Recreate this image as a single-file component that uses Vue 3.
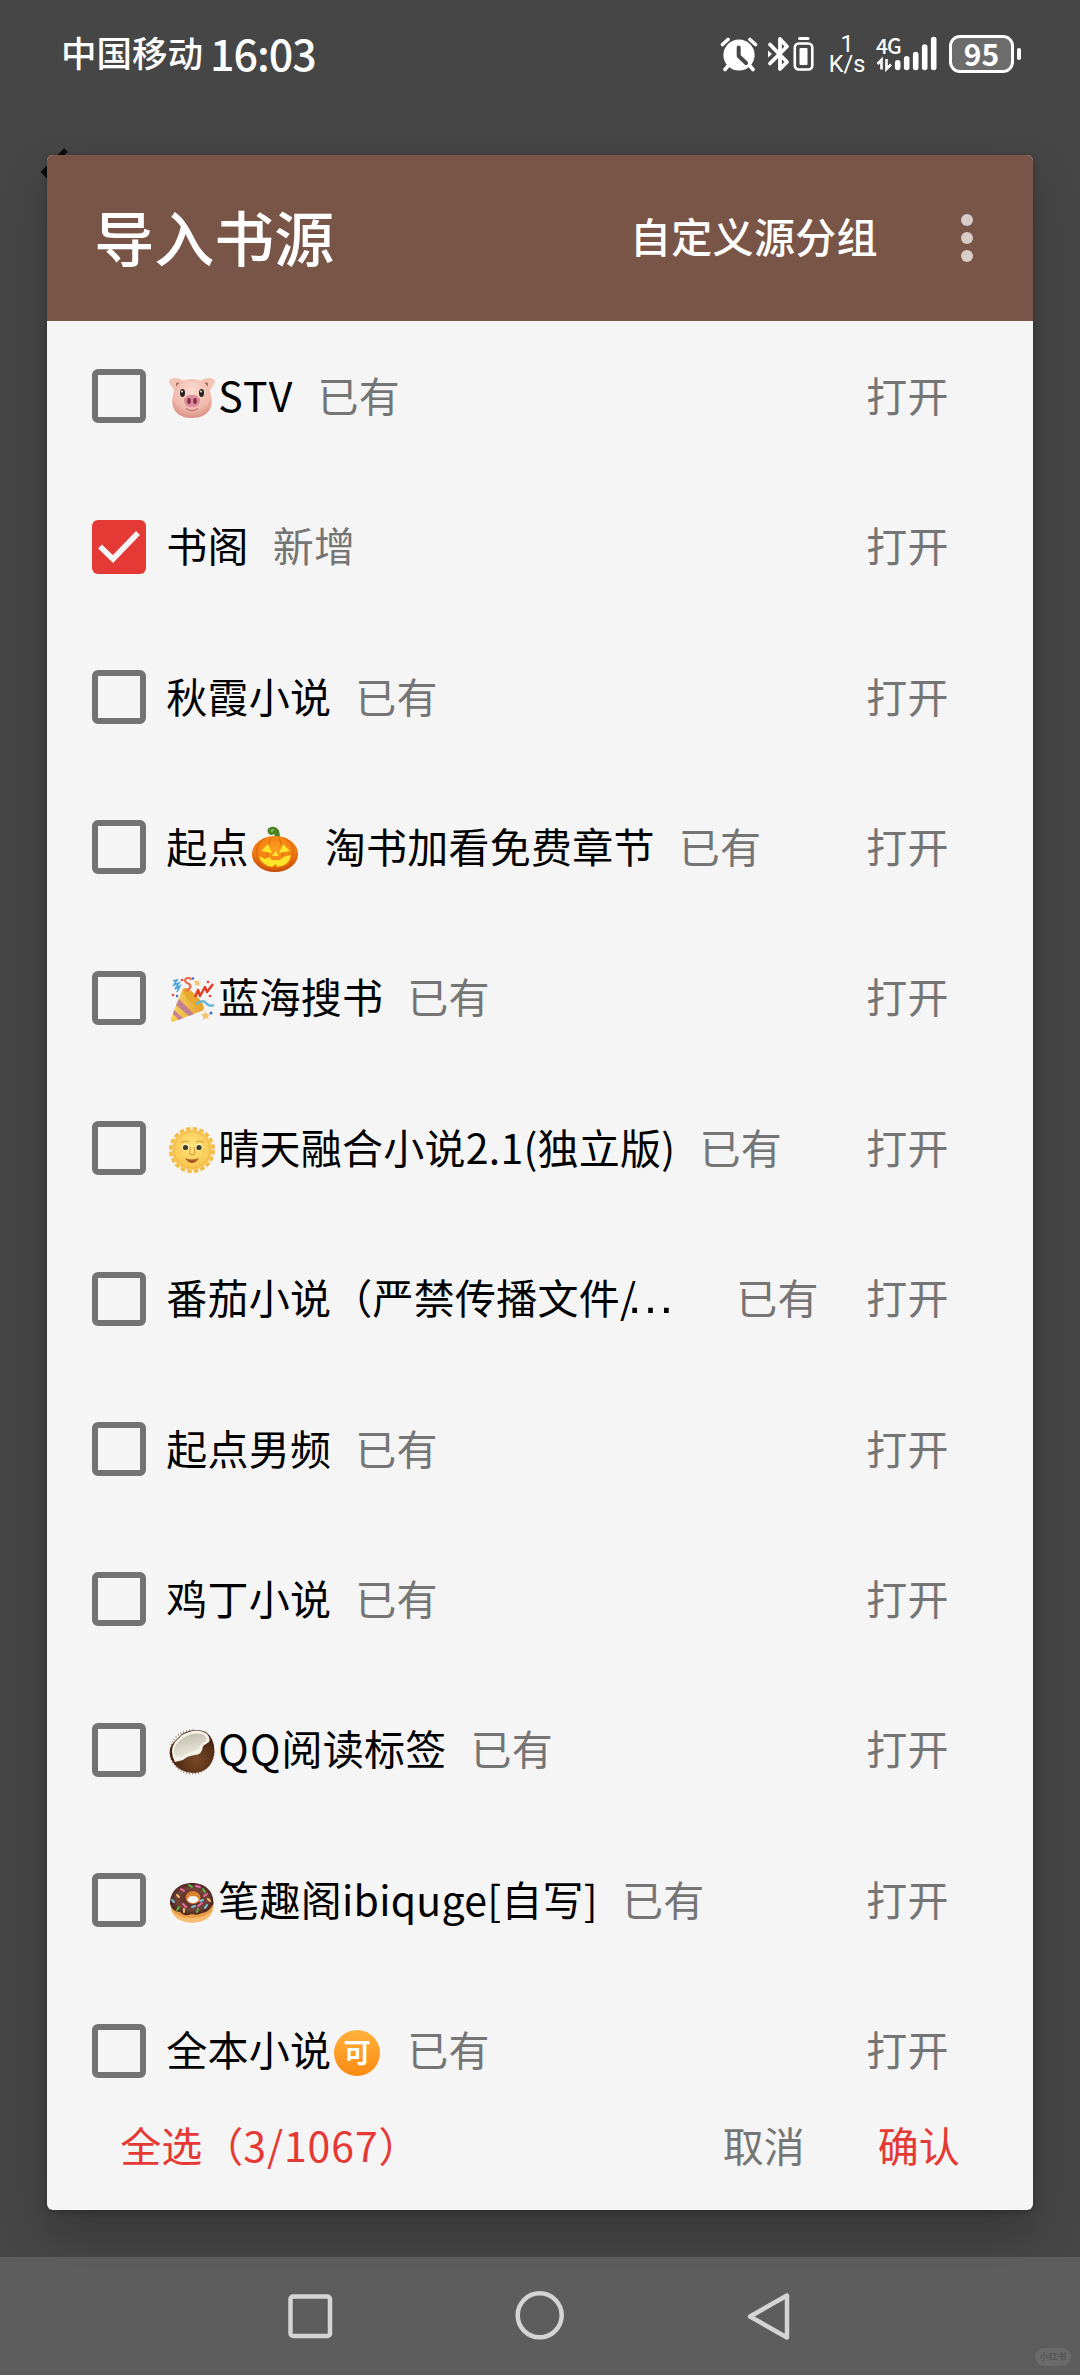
<template>
  <div class="screen">
    <header class="status-bar">
      <div class="carrier">中国移动</div>
      <div class="clock">16:03</div>
      <div class="status-icons">
        <svg class="icon-alarm" width="38" height="36" viewBox="0 0 38 36">
          <circle cx="19" cy="19" r="15.6" fill="#fff" />
          <path d="M2.5 8.500L8 3.500M35.500 8.500L30 3.500M8 30L5 33.500M30 30L33 33.500" stroke="#fff" stroke-width="3.600" stroke-linecap="round" />
          <path d="M18.700 11.500V20L26 27" fill="none" stroke="#464646" stroke-width="4" stroke-linecap="round" stroke-linejoin="round" />
        </svg>
        <svg class="icon-bluetooth" width="24" height="36" viewBox="0 0 24 36">
          <path d="M3 8.500L20 26L13 33V3L20 10.500L3 27.500" fill="none" stroke="#fff" stroke-width="3.800" stroke-linejoin="round" stroke-linecap="round" />
          <path d="M1 14.500L5 18L1 21.500Z" fill="#fff" />
        </svg>
        <svg class="icon-device" width="21" height="36" viewBox="0 0 21 36">
          <rect x="5" y="1" width="11.500" height="3" rx="1.500" fill="#fff" />
          <rect x="1.800" y="7.500" width="17.500" height="26" rx="4" fill="none" stroke="#fff" stroke-width="2.600" />
          <rect x="6.500" y="12" width="8" height="17" rx="1" fill="#fff" />
        </svg>
        <div class="speed">
          <span>1</span>
          <span>K/s</span>
        </div>
        <div class="signal">
          <span class="net-type">4G</span>
          <svg width="62" height="36" viewBox="0 0 62 36">
            <path d="M5.500 33.500V24L1.500 28M10.500 23V33L15 28.500" fill="none" stroke="#fff" stroke-width="2.600" />
            <path d="M21.700 26.800V31.500M30.700 22.800V31.500M39.700 18.500V31.500M48.700 11V31.500M57.700 3.500V31.500" stroke="#fff" stroke-width="5.600" stroke-linecap="round" />
          </svg>
        </div>
        <div class="battery">95</div>
        <div class="battery-cap"></div>
      </div>
    </header>

    <svg class="back-arrow" width="40" height="60" viewBox="0 0 40 60">
      <path d="M28 7L6 29L28 51" fill="none" stroke="#0c0c0c" stroke-width="5" />
    </svg>

    <main class="dialog">
      <div class="toolbar">
        <h1>导入书源</h1>
        <div class="group-action">自定义源分组</div>
        <div class="more"><i></i><i></i><i></i></div>
      </div>

      <div class="list">
        <div v-for="(s, i) in sources" :key="i" class="row">
          <div :class="['checkbox', { checked: s.checked }]">
            <svg v-if="s.checked" width="54" height="54" viewBox="0 0 54 54">
              <path d="M8 26.500L21 39L46 13" fill="none" stroke="#f5f5f5" stroke-width="5.500" />
            </svg>
          </div>
          <div :class="['name', { cut: s.cut }]">
            <template v-for="(part, j) in s.name" :key="j">
              <span v-if="part.icon === 'ok'" class="emoji ok">可</span>
              <svg v-else-if="part.icon" class="emoji" width="46" height="46" viewBox="0 0 46 46">
                <g v-if="part.icon === 'pig'">
                  <path d="M2 4Q8 1 15 6L6 16Q0 9 0 6Q0 5 2 4ZM44 4Q38 1 31 6L40 16Q46 9 46 6Q46 5 44 4Z" fill="#f3c3b6" />
                  <path d="M7 8Q10 7 13 8L7 14ZM39 8Q36 7 33 8L39 14Z" fill="#a9685c" />
                  <path d="M23 4C35 4 41 11 42 21C45 32 39 43 23 43C7 43 1 32 4 21C5 11 11 4 23 4Z" fill="url(#pigSkin)" />
                  <ellipse cx="13.500" cy="18" rx="2.500" ry="4" fill="#2b2323" />
                  <ellipse cx="32.500" cy="18" rx="2.500" ry="4" fill="#2b2323" />
                  <circle cx="13" cy="16.500" r="0.900" fill="#fff" />
                  <circle cx="32" cy="16.500" r="0.900" fill="#fff" />
                  <ellipse cx="23" cy="26" rx="8" ry="6.200" fill="#d98a9b" />
                  <ellipse cx="20" cy="26" rx="1.800" ry="3" fill="#842846" />
                  <ellipse cx="26" cy="26" rx="1.800" ry="3" fill="#842846" />
                  <path d="M17 33.500Q23 38 29 33.500" fill="none" stroke="#b8786b" stroke-width="1.200" />
                </g>
                <g v-else-if="part.icon === 'pumpkin'">
                  <path d="M20 15Q24 9 22 8Q19 10 17 8Q13 3 19 1Q29-1 28 15Z" fill="#4b8424" />
                  <path d="M20 6Q19 3 22 4" fill="none" stroke="#a9cf78" stroke-width="1.200" />
                  <ellipse cx="23" cy="28" rx="23" ry="18" fill="url(#pumpkinSkin)" />
                  <path d="M13 12Q3 18 5 30Q7 41 14 44M33 12Q43 18 41 30Q39 41 32 44M19 12Q11 28 19 45M27 12Q35 28 27 45" fill="none" stroke="#c94b08" stroke-width="0.900" opacity="0.700" />
                  <path d="M16 18L20 27L9 25ZM31 18L27 27L38 25ZM23.500 25L27 30H20ZM7 30L13 33L17 31L20 34L28 34L31 31L39 29Q37 40 25 41L24 38L20 41Q9 39 7 30Z" fill="#fde52a" />
                </g>
                <g v-else-if="part.icon === 'party'">
                  <path d="M14 11L35 33L4 45Q1 45 2 41Z" fill="url(#cone)" />
                  <path d="M10 22L25 37L20 39L7 28ZM5 33L14 41L10 43L4 37Z" fill="#c48093" />
                  <ellipse cx="24.500" cy="22" rx="4.500" ry="14.500" transform="rotate(-43 24.500 22)" fill="#e8a830" />
                  <path d="M17 14Q24 10 20 7Q13 4 18 1Q21 0 22 3" fill="none" stroke="#ee6b47" stroke-width="2.200" />
                  <path d="M4 4L8 3L5 8L10 6L6 12L11 9L8 15" fill="none" stroke="#48a4d7" stroke-width="1.600" />
                  <path d="M26 20L29 13L31 19L36 10L38 15L44 7" fill="none" stroke="#df3d26" stroke-width="2.500" stroke-linejoin="round" />
                  <path d="M27 27Q34 22 37 26T45 28" fill="none" stroke="#65b9d8" stroke-width="2.500" />
                  <g fill="#ef4437"><circle cx="4" cy="18" r="1.300" /><circle cx="13" cy="3" r="1.300" /><circle cx="39" cy="5" r="1.300" /><circle cx="41" cy="19" r="1.300" /></g>
                  <g fill="#3264c8"><circle cx="24" cy="1.500" r="1.200" /><circle cx="42" cy="36" r="1.500" /><circle cx="8" cy="19" r="1.200" /></g>
                  <path d="M28 3L29.500 5L32 5L30 7L31 9L28 8L26 9L26 6L25 4H27ZM36 34L38 37L41 37L39 39L40 42L37 41L34 43L34 39L32 37L35 37Z" fill="#f4c66d" />
                </g>
                <g v-else-if="part.icon === 'sun'">
                  <circle cx="23" cy="23" r="21.200" fill="none" stroke="#f5bd48" stroke-width="3.600" stroke-dasharray="4.600 2.060" />
                  <circle cx="23" cy="23" r="20" fill="#f8c85a" />
                  <circle cx="23" cy="23" r="18" fill="url(#sunFace)" stroke="#e9ae3c" stroke-width="0.600" />
                  <circle cx="16.500" cy="20" r="3.500" fill="#fff1b5" />
                  <circle cx="30" cy="20" r="3.500" fill="#fff1b5" />
                  <circle cx="16.500" cy="20.500" r="2.600" fill="#433a2b" />
                  <circle cx="30" cy="20.500" r="2.600" fill="#433a2b" />
                  <path d="M12 15.500Q16 12.500 20 15M27 15Q31 12.500 35 15.500M21.500 20L20.500 27Q23 29 26 27L25 20" fill="none" stroke="#d7962f" stroke-width="1" />
                  <path d="M16 31Q23 34 30 31Q27 36 23 36T16 31Z" fill="#a65726" />
                </g>
                <g v-else-if="part.icon === 'coconut'">
                  <circle cx="23" cy="23" r="21.800" fill="none" stroke="#8b6448" stroke-width="1.600" stroke-dasharray="0.800 2.200" />
                  <path d="M13 5Q25-2 37 3Q47 11 45 26Q42 42 26 44Q9 44 2 30Q-2 20 6 12Z" fill="url(#coconutShell)" />
                  <path d="M13 6Q27-2 37 4Q42 9 40 13L34 17Q33 26 26 26Q18 27 14 31L6 33Q0 22 6 13Z" fill="#f4f1e6" />
                  <path d="M14 9Q26 2 35 6Q39 9 37 12Q31 14 30 20Q20 23 13 28Q6 30 5 23Q5 15 14 9Z" fill="url(#coconutFlesh)" />
                </g>
                <g v-else-if="part.icon === 'donut'">
                  <ellipse cx="23" cy="26" rx="21.500" ry="17.500" fill="#e99b45" />
                  <path d="M2 30Q8 39 23 39T44 30Q42 43 23 43.500Q5 43 2 30Z" fill="#f7bd70" />
                  <path d="M23 4C37 4 45 13 44.500 25C41 29 40 33 33 34Q28 37 23 35Q15 38 11 33Q4 33 1 25C1 13 9 4 23 4Z" fill="url(#glaze)" />
                  <ellipse cx="24" cy="18.500" rx="7.500" ry="6.500" fill="#db8232" />
                  <ellipse cx="24" cy="20.500" rx="5.500" ry="3.500" fill="#f5f5f5" />
                  <path d="M12 10L15 12M27 7L31 8M35 17L38 15M33 24L29 27M14 25L17 28" stroke="#e56ba9" stroke-width="2" stroke-linecap="round" />
                  <path d="M20 6L23 8M34 10L36 13M10 28L8 31M29 30L28 33" stroke="#55b948" stroke-width="2" stroke-linecap="round" />
                  <path d="M3 21L5 23M26 27L23 28M31 22L34 21M38 26L36 29" stroke="#79c6e8" stroke-width="2" stroke-linecap="round" />
                  <path d="M8 16L10 18M15 30V33M39 20L41 22" stroke="#f3c06d" stroke-width="2" stroke-linecap="round" />
                </g>
              </svg>
              <span v-else :class="part.cls">{{ part.text || part }}</span>
            </template>
            <span v-if="s.cut" class="dots">…</span>
          </div>
          <div class="state">{{ s.checked ? '新增' : '已有' }}</div>
          <div class="open">打开</div>
        </div>
      </div>

      <div class="footer">
        <div class="select-all">全选（<span>3/1067</span>）</div>
        <div class="cancel">取消</div>
        <div class="confirm">确认</div>
      </div>
    </main>

    <nav class="nav-bar">
      <svg width="52" height="52" viewBox="0 0 52 52">
        <rect x="5.500" y="7.500" width="39.500" height="39.500" rx="2.500" />
      </svg>
      <svg width="52" height="52" viewBox="0 0 52 52">
        <circle cx="25.700" cy="26.300" r="22" />
      </svg>
      <svg width="52" height="52" viewBox="0 0 52 52">
        <path d="M44 6.500V48.500L7 27.500Z" />
      </svg>
    </nav>
    <div class="watermark">小红书</div>

    <!-- shared gradients for the emoji -->
    <svg class="defs" width="0" height="0">
      <defs>
        <radialGradient id="pigSkin" cx="0.5" cy="0.3" r="0.7">
          <stop offset="0" stop-color="#fbdcd2" />
          <stop offset="0.700" stop-color="#efb8aa" />
          <stop offset="1" stop-color="#d98f82" />
        </radialGradient>
        <radialGradient id="pumpkinSkin" cx="0.5" cy="0.35" r="0.65">
          <stop offset="0" stop-color="#ff9d1c" />
          <stop offset="0.700" stop-color="#f07a10" />
          <stop offset="1" stop-color="#c44708" />
        </radialGradient>
        <linearGradient id="cone">
          <stop offset="0" stop-color="#f9d45c" />
          <stop offset="1" stop-color="#e5a032" />
        </linearGradient>
        <radialGradient id="sunFace" cx="0.5" cy="0.4" r="0.6">
          <stop offset="0" stop-color="#ffe682" />
          <stop offset="1" stop-color="#f8c54e" />
        </radialGradient>
        <radialGradient id="coconutShell" cx="0.6" cy="0.7" r="0.6">
          <stop offset="0" stop-color="#7a4a28" />
          <stop offset="1" stop-color="#43220f" />
        </radialGradient>
        <linearGradient id="coconutFlesh" x1="0" y1="0" x2="0.3" y2="1">
          <stop offset="0" stop-color="#bfbaa8" />
          <stop offset="1" stop-color="#ebe8dc" />
        </linearGradient>
        <radialGradient id="glaze">
          <stop offset="0" stop-color="#4e2218" />
          <stop offset="0.700" stop-color="#74443a" />
          <stop offset="1" stop-color="#4d251c" />
        </radialGradient>
      </defs>
    </svg>
  </div>
</template>

<script setup>
const e = icon => ({ icon })

const sources = [
  { name: [e('pig'), { text: 'STV', cls: 'wide' }] },
  { name: ['书阁'], checked: true },
  { name: ['秋霞小说'] },
  { name: ['起点', e('pumpkin'), { text: '淘书加看免费章节', cls: 'spaced' }] },
  { name: [e('party'), '蓝海搜书'] },
  { name: [e('sun'), '晴天融合小说2.1(独立版)'] },
  { name: ['番茄小说（严禁传播文件/'], cut: true },
  { name: ['起点男频'] },
  { name: ['鸡丁小说'] },
  { name: [e('coconut'), { text: 'QQ', cls: 'wide' }, '阅读标签'] },
  { name: [e('donut'), '笔趣阁ibiquge[自写]'] },
  { name: ['全本小说', e('ok')] }
]
</script>

<style>
body {
  margin: 0;
  background: #464646;
}
</style>

<style scoped>
.screen {
  position: relative;
  width: 1080px;
  height: 2375px;
  display: flex;
  flex-direction: column;
  overflow: hidden;
  background: #464646;
  font-family: "Noto Sans CJK SC", sans-serif;
  font-size: 41px;
  white-space: nowrap;
}

.status-bar {
  height: 108px;
  margin-bottom: 47px;
  display: flex;
  align-items: center;
  color: #fff;
  padding: 0 59px 0 61px;
  font-weight: 500;
}

.carrier {
  font-size: 35.500px;
  line-height: 104px;
  padding-bottom: 4px;
}

.clock {
  font-size: 43px;
  line-height: 104px;
  padding-bottom: 5px;
  margin-left: 7px;
  letter-spacing: -1px;
}

.status-icons {
  display: flex;
  align-items: center;
  margin-left: auto;
}

.icon-bluetooth {
  margin-left: 9px;
}

.icon-device {
  margin-left: 2px;
}

.speed {
  width: 36px;
  margin-left: 15px;
  display: flex;
  flex-direction: column;
  align-items: center;
  font-family: Roboto, sans-serif;
  font-size: 23.500px;
  line-height: 20px;
  font-weight: 400;
}

.signal {
  position: relative;
  display: flex;
  margin-left: 11px;
}

.net-type {
  position: absolute;
  top: -4px;
  left: 0;
  font-size: 21px;
  line-height: 26px;
  letter-spacing: -1px;
}

.battery {
  box-sizing: border-box;
  width: 65px;
  height: 38px;
  margin-left: 11px;
  border: 3px solid #fff;
  border-radius: 11px;
  background: #6c6c6c;
  font-size: 30px;
  line-height: 30px;
  font-weight: 700;
  text-align: center;
}

.battery-cap {
  width: 4px;
  height: 12px;
  margin-left: 3px;
  border-radius: 2px;
  background: #fff;
}

/* page behind the dialog */
.back-arrow {
  position: absolute;
  left: 38px;
  top: 143px;
}

.dialog {
  position: relative;
  width: 985.500px;
  height: 2054.500px;
  margin-left: 47.300px;
  display: flex;
  flex-direction: column;
  border-radius: 6px;
  overflow: hidden;
  background: #f5f5f5;
  box-shadow: 0 24px 48px rgba(0, 0, 0, 0.22), 0 2px 6px rgba(0, 0, 0, 0.2);
}

.toolbar {
  height: 166px;
  flex: none;
  display: flex;
  align-items: center;
  padding: 0 60px 0 47px;
  background: #795547;
  color: #fff;
}

h1 {
  margin: 0;
  padding-bottom: 6px;
  font-size: 60px;
  font-weight: 500;
}

.group-action {
  margin-left: auto;
  padding-bottom: 6px;
  font-weight: 500;
  letter-spacing: 0.300px;
}

.more {
  display: flex;
  flex-direction: column;
  gap: 6px;
  margin-left: 83px;
}

.more i {
  width: 12px;
  height: 12px;
  border-radius: 50%;
  background: #d7ccc8;
}

.list {
  flex: 1;
  min-height: 0;
  overflow: hidden;
}

.row {
  height: 150.420px;
  display: flex;
  align-items: center;
  padding: 0 84px 0 45px;
}

.checkbox {
  box-sizing: border-box;
  width: 54px;
  height: 54px;
  flex: none;
  border: 6px solid #737373;
  border-radius: 6px;
}

.checkbox.checked {
  border: 0;
  background: #e53935;
}

.name,
.state,
.open {
  padding-bottom: 5px;
  letter-spacing: 0.250px;
}

.name {
  display: flex;
  align-items: center;
  margin-left: 20px;
  color: #000;
}

.name.cut {
  width: 546px;
}

.wide {
  letter-spacing: 1.200px;
}

.spaced {
  margin-left: 24px;
}

.emoji {
  width: 46px;
  height: 46px;
  margin: 9px 3px 0;
}

.ok {
  border-radius: 50%;
  background: linear-gradient(#ffb23c, #fb8a12);
  color: #fff;
  font-size: 27px;
  line-height: 43px;
  font-weight: 700;
  text-align: center;
}

.dots {
  font-family: "Liberation Sans", sans-serif;
  font-size: 50px;
  margin-left: -11px;
}

.state {
  margin-left: 24px;
  color: #757575;
}

.open {
  margin-left: auto;
  color: #757575;
}

.footer {
  height: 126px;
  box-sizing: border-box;
  flex: none;
  display: flex;
  align-items: center;
  padding: 0 73px 5px 73px;
  color: #e53935;
}

.select-all span {
  letter-spacing: 0.900px;
}

.cancel {
  margin-left: auto;
  color: #757575;
}

.confirm {
  margin-left: 73px;
}

.nav-bar {
  position: relative;
  height: 118px;
  margin-top: auto;
  box-sizing: border-box;
  display: flex;
  justify-content: center;
  gap: 177px;
  padding-top: 32px;
  background: rgba(255, 255, 255, 0.13);
}

.nav-bar svg {
  fill: none;
  stroke: #d4d4d4;
  stroke-width: 4.500;
  stroke-linejoin: round;
}

.watermark {
  position: absolute;
  right: 9px;
  bottom: 9px;
  width: 36px;
  height: 18px;
  border-radius: 9px;
  background: #6b6b6b;
  color: #565656;
  font-size: 9px;
  line-height: 17px;
  font-weight: 700;
  text-align: center;
}

.defs {
  position: absolute;
}
</style>
